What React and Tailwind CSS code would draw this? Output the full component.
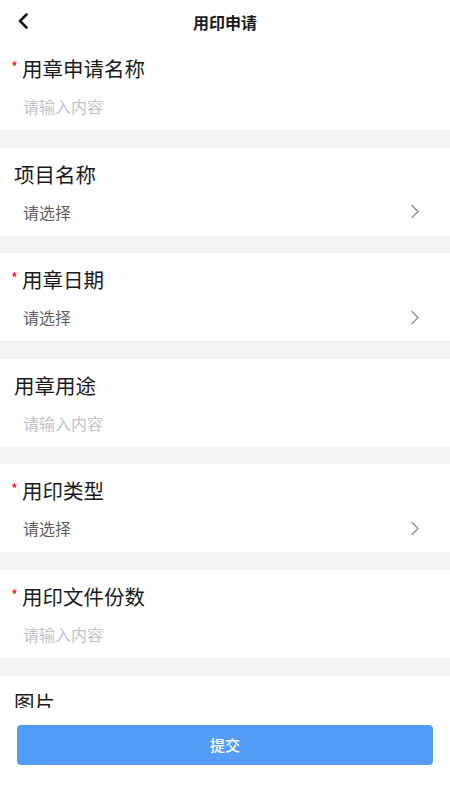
const fields = [
  { label: "用章申请名称", required: true, hint: "请输入内容", select: false },
  { label: "项目名称", required: false, hint: "请选择", select: true },
  { label: "用章日期", required: true, hint: "请选择", select: true },
  { label: "用章用途", required: false, hint: "请输入内容", select: false },
  { label: "用印类型", required: true, hint: "请选择", select: true },
  { label: "用印文件份数", required: true, hint: "请输入内容", select: false },
];

const font = { fontFamily: '"Noto Sans CJK SC", "Noto Sans", sans-serif' };

const Chevron = () => (
  <svg width="10" height="15" viewBox="0 0 10 15" fill="none">
    <polyline points="2,1.5 8,7.5 2,13.5" stroke="#8f8f8f" strokeWidth="1.4" strokeLinecap="round" strokeLinejoin="round" />
  </svg>
);

const Field = ({ label, required, hint, select }) => (
  <div className="bg-white h-[88px] mb-[17.6px] pt-[12px]">
    <div className="flex items-center pl-[14px] text-[20.5px] leading-7 text-[#1a1a1a]">
      {required && <span className="-ml-[3px] w-[11px] text-[15px] leading-none text-[#ee0a24] -mt-[3px]">*</span>}
      <span>{label}</span>
    </div>
    <div className="mt-[12px] flex items-center justify-between pl-[23px] pr-[30px] leading-6">
      <span className={select ? "text-[16px] text-[#5f5f5f]" : "text-[16px] text-[#c0c4cc]"}>{hint}</span>
      {select && <Chevron />}
    </div>
  </div>
);

const App = () => {
  return (
    <div className="w-[450px] h-[800px] bg-[#f2f3f5] flex flex-col overflow-hidden" style={font}>
      {/* HEADER */}
      <div className="h-[42px] bg-white relative flex items-center justify-center shrink-0">
        <svg className="absolute left-[17px] top-[13px]" width="12" height="16" viewBox="0 0 12 16" fill="none">
          <polyline points="9.5,1.5 3,8 9.5,14.5" stroke="#111" strokeWidth="2.6" strokeLinecap="round" strokeLinejoin="round" />
        </svg>
        <h1 className="text-[16px] font-semibold text-[#1a1a1a] mt-[2px]">用印申请</h1>
      </div>

      {/* FORM */}
      <div className="flex-1 overflow-hidden">
        {fields.map((f, i) => (
          <Field key={i} {...f} />
        ))}
        <div className="bg-white h-[88px] pt-[12px]">
          <div className="pl-[14px] text-[20.5px] leading-7 text-[#1a1a1a]">图片</div>
        </div>
      </div>

      {/* FOOTER */}
      <div className="bg-white h-[92px] shrink-0 px-[17px] pt-[17px]">
        <button className="w-full h-10 bg-[#539cf8] rounded-[4px] text-white text-[15px] font-medium">提交</button>
      </div>
    </div>
  );
};

export default App;
